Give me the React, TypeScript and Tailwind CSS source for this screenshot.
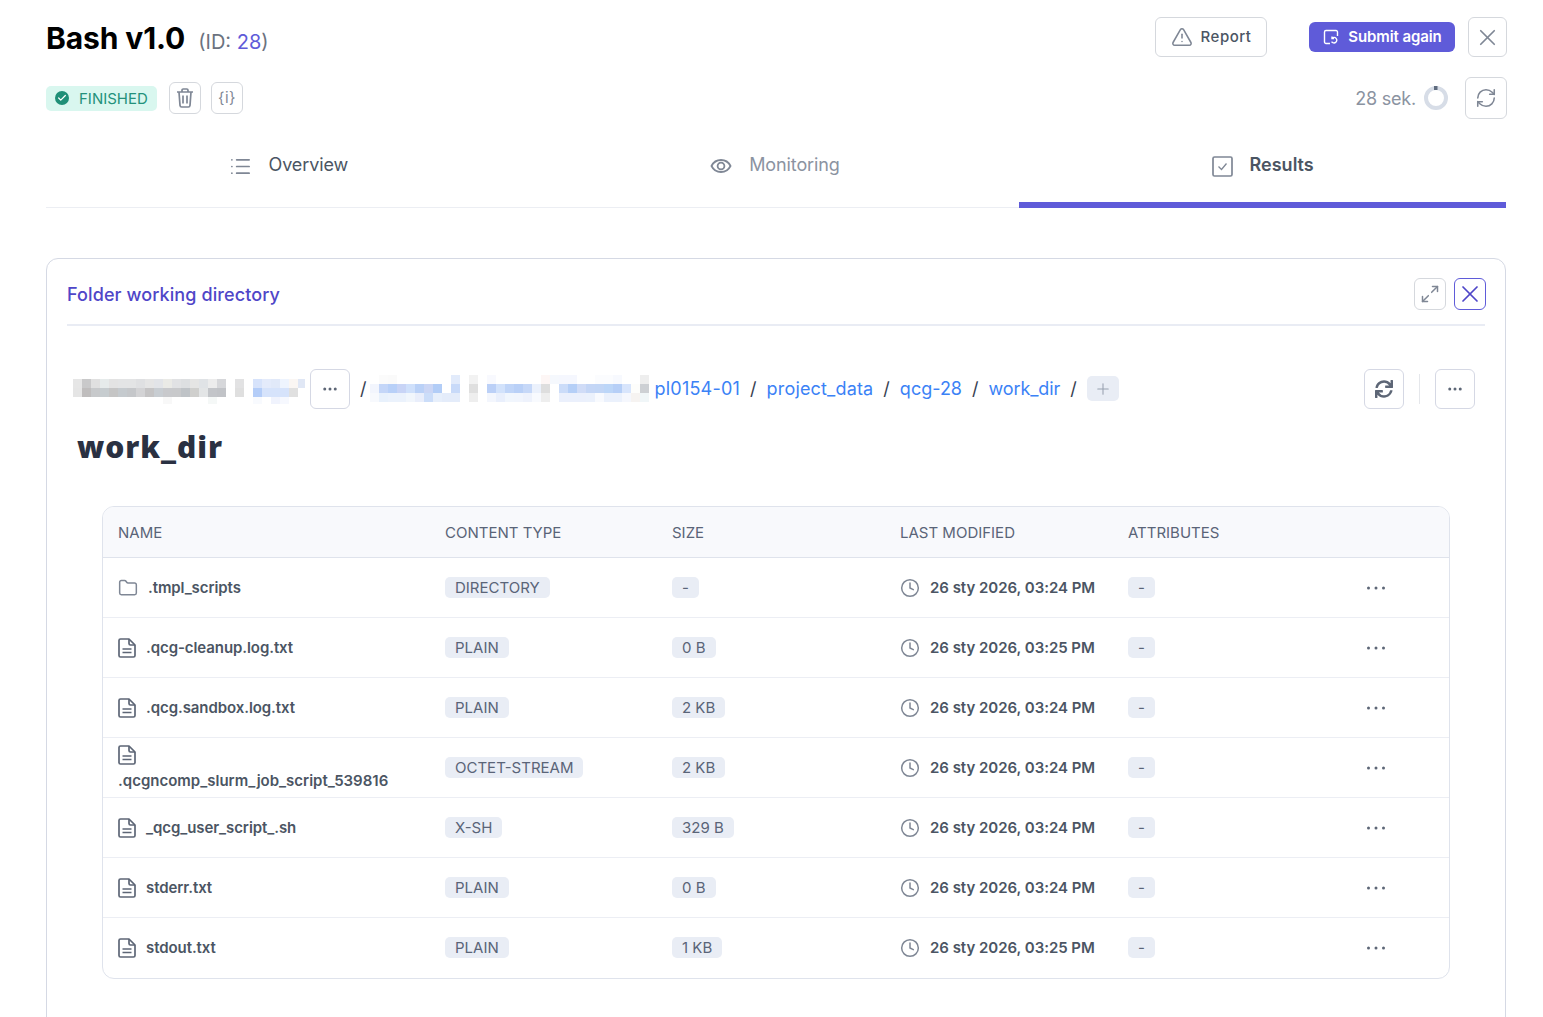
import { Check, Clock, Ellipsis, Folder, List, Maximize2, Plus, RefreshCw, TriangleAlert, X } from "lucide-react"
import { FaSync } from "react-icons/fa"

const rows = [
  { name: ".tmpl_scripts", type: "DIRECTORY", size: "-", time: "03:24", dir: true },
  { name: ".qcg-cleanup.log.txt", type: "PLAIN", size: "0 B", time: "03:25" },
  { name: ".qcg.sandbox.log.txt", type: "PLAIN", size: "2 KB", time: "03:24" },
  { name: ".qcgncomp_slurm_job_script_539816", type: "OCTET-STREAM", size: "2 KB", time: "03:24", wrap: true },
  { name: "_qcg_user_script_.sh", type: "X-SH", size: "329 B", time: "03:24" },
  { name: "stderr.txt", type: "PLAIN", size: "0 B", time: "03:24" },
  { name: "stdout.txt", type: "PLAIN", size: "1 KB", time: "03:25" },
]

const gridCols = "grid grid-cols-[327px_227px_228px_228px_1fr] items-center"

function Badge({ children }: { children: React.ReactNode }) {
  return <span className="block h-[21px] w-fit rounded-[5px] bg-[#e9edf5] px-2.5 text-[15px] leading-[21px] text-[#5a6478]">{children}</span>
}

function FileIcon({ className }: { className?: string }) {
  return (
    <svg width="18" height="20" viewBox="0 0 18 20" fill="none" stroke="currentColor" strokeWidth="1.7" strokeLinejoin="round" className={className}>
      <path d="M2.500 1h8.500l6 6v10.500a1.500 1.500 0 0 1-1.500 1.500h-13A1.500 1.500 0 0 1 1 17.500v-15A1.500 1.500 0 0 1 2.500 1Z" />
      <path d="M11 1v4.500a1.500 1.500 0 0 0 1.500 1.500H17M4.500 11h9M4.500 14.500h9" />
    </svg>
  )
}

function Dots() {
  return (
    <svg width="18" height="4" viewBox="0 0 18 4" fill="#5d6676">
      <circle cx="1.500" cy="2" r="1.500" />
      <circle cx="9" cy="2" r="1.500" />
      <circle cx="16.500" cy="2" r="1.500" />
    </svg>
  )
}

// pixelated blocks covering the hidden part of the path, one 9px cell per colour
function Mosaic({ width, top, cells }: { width: number; top: number; cells: string[][] }) {
  return (
    <svg width={width} height={30} className="shrink-0">
      {cells.map((row, y) =>
        row.map((fill, x) => (fill ? <rect key={`${x}-${y}`} x={x * 9} y={top + y * 9} width={9} height={9} fill={fill} /> : null)),
      )}
    </svg>
  )
}

const _ = ""
const greyCells = [
  ["#e6e6e6", "#c9c9ca", "#e0e0e0", "#e6ebeb", "#e3e3e3", "#e3e4e5", "#e3e4e5", "#dfe0e2", "#e5e5e5", "#e2e4e8", "#eaeae6", "#e1e2e4", "#dddfe1", "#e5e5e4", "#e0e3e6", "#ececec", "#d6d7da", _, "#e2e2e3", _, "#d7e3fb", "#e4ebfb", "#e1e9f9", "#eef4fe", "#faf6f3", "#e0e7f5"],
  ["#e5e5e5", "#bfbdbd", "#c7c9cb", "#c6cccf", "#c5c5c5", "#c5cace", "#c5c7ca", "#d3d3d5", "#c5c4c5", "#c8cdd2", "#c8c9cc", "#c8c9cb", "#bfc3c7", "#cfcfcd", "#e3e5e6", "#c3c5c9", "#c1c3c7", _, "#dfdfdf", _, "#b4cdf8", "#d6e3fb", "#d6e3fb", "#d6e3fb", "#e0e0e0"],
  [_, _, _, _, _, _, _, _, _, _, "#f8f8f8", _, _, _, _, "#f5f8f7", _, _, _, _, "#f8fafe", _, "#f0f3fd", "#f6f8fe"],
]
const blueCells = [
  [_, "#fbfbfb", "#fafafa", _, _, _, _, _, _, "#e2ebfb", _, "#f2f2f2", _, "#f8f9fe", _, _, _, _, _, "#fdf6f5", "#f5f8fd", "#f5f7fe", "#f5f7fe", _, _, "#fbfcfe", "#fbfcfe", "#f7f9fe", _, _, "#eeeeee"],
  ["#f2f5fd", "#c4d6f8", "#b8d0f8", "#c8d4f6", "#cfe0fb", "#bad1f7", "#cbd6f5", "#b2cdf7", _, "#c8daf9", _, "#dfdfdf", _, "#bbd0f7", "#d2e2fb", "#c0d5f8", "#b9d0f7", "#c6d8f8", "#ebf1fc", "#dedede", _, "#cbdcf9", "#b5cff7", "#d0dcf7", "#c4d6f6", "#c2d6f6", "#bcd6f8", "#b6cff7", "#d8e5fc", "#fdfdfb", "#cdd0d4"],
  ["#f7f9fd", "#e8f1fc", "#ebf2fc", "#ebf2fc", "#f1f6fc", "#e9eefb", "#cbddf9", "#e7effb", "#e4ecfa", "#e4ecfa", _, "#eeeeee", _, "#f3f6fd", "#e9effc", "#f1f6fd", "#f1f5fd", "#eef2fc", "#f8fafe", "#eeeeee", _, "#ebf0fc", "#ebf0fc", "#ebf0fc", "#ebf1fc", "#f8fafe", "#ebf1fc", "#ebf1fc", "#f5f7fd", "#f6f3f1", "#f0f6f8"],
]

export default function App() {
  return (
    <div className="h-[1017px] overflow-hidden bg-white pl-[46px] pr-[37px] font-['Inter',sans-serif] text-[#4b5563]">
      <header className="-mr-px flex h-[77px] items-start justify-between pt-[17px]">
        <div className="flex items-baseline pt-[1px]">
          <h1 className="text-[30px] leading-10 font-bold tracking-[-0.1px] text-black">Bash v1.0</h1>
          <span className="ml-[13px] text-xl text-[#6b7280]">(ID: <span className="text-[#5f5bd9]">28</span>)</span>
        </div>
        <div className="flex items-start">
          <button className="flex h-10 w-28 items-center justify-center gap-2 rounded-md border border-[#d5d8dd] text-[15px] font-medium tracking-[0.5px] text-[#4b5563]">
            <TriangleAlert className="size-[22px] text-[#7f8795]" strokeWidth={1.7} />
            Report
          </button>
          <button className="mt-[5px] ml-[42px] flex h-[30px] w-[146px] items-center justify-center gap-2 rounded-md bg-[#5f5bd9] text-[15px] font-semibold tracking-[-0.1px] text-white">
            <svg width="18" height="18" viewBox="0 0 18 18" fill="none" stroke="currentColor" strokeWidth="1.400">
              <path d="M8 15.500H4a1.500 1.500 0 0 1-1.500-1.500V4A1.500 1.500 0 0 1 4 2.500h10A1.500 1.500 0 0 1 15.500 4v4" />
              <path d="M10 10.200a2.800 2.800 0 1 1-.4 3.400M10 8.600v2h2" />
            </svg>
            Submit again
          </button>
          <button className="ml-[13px] flex h-10 w-[39px] items-center justify-center rounded-md border border-[#d5d8dd] text-[#7f8795]">
            <X className="size-[27px]" strokeWidth={1.500} />
          </button>
        </div>
      </header>

      <div className="-mr-px flex h-[42px] items-center justify-between">
        <div className="flex items-center">
          <span className="flex h-[25px] w-[111px] items-center gap-[10px] rounded-[5px] bg-[#d9f7ef] pl-[9px] text-[15px] text-[#23917b]">
            <span className="flex size-[14px] items-center justify-center rounded-full bg-[#1f8f77] text-white">
              <Check className="size-2.5" strokeWidth={3} />
            </span>
            <span className="pt-[2px]">FINISHED</span>
          </span>
          <button className="ml-3 flex size-8 items-center justify-center rounded-md border border-[#d5d8dd] text-[#7f8795]">
            <svg width="18" height="20" viewBox="0 0 18 20" fill="none" stroke="currentColor" strokeWidth="1.700">
              <path d="M1 4h16M6 4V2.200C6 1.500 6.500 1 7.200 1h3.600c.7 0 1.200.5 1.200 1.200V4" />
              <path d="M3 4l1 13.400c.1.9.7 1.600 1.600 1.600h6.800c.9 0 1.500-.7 1.600-1.600L15 4" />
              <path d="M7 7.500v8M11 7.500v8" />
            </svg>
          </button>
          <button className="ml-2.5 flex size-8 items-center justify-center rounded-md border border-[#d5d8dd] text-[15px] tracking-[0.5px] text-[#7f8795]">{"{i}"}</button>
        </div>
        <div className="flex items-center">
          <span className="pt-[2px] text-lg tracking-[-0.2px] text-[#8b93a1]">28 sek.</span>
          <svg width="24" height="24" viewBox="0 0 24 24" fill="none" className="ml-2">
            <circle cx="12" cy="12" r="10" stroke="#d7dde7" strokeWidth="4" />
            <rect x="10" y="0" width="3.500" height="4" fill="#5f6b7e" />
          </svg>
          <button className="ml-[17px] flex size-[42px] items-center justify-center rounded-md border border-[#d5d8dd] text-[#7f8795]">
            <RefreshCw className="size-[22px]" strokeWidth={1.700} />
          </button>
        </div>
      </div>

      <nav className="mt-px grid h-[88px] grid-cols-3 border-b border-[#eceef3]">
        <div className="flex items-start justify-center gap-[17px] pt-[34px] pr-0.5 text-lg tracking-[-0.1px]">
          <List className="mt-px size-[23px] text-[#7f8795]" strokeWidth={1.800} />
          <span className="leading-[22px]">Overview</span>
        </div>
        <div className="flex items-start justify-center gap-[17px] pt-[34px] pr-0.5 text-lg tracking-[-0.1px] text-[#8b93a1]">
          <svg width="22" height="22" viewBox="0 0 22 22" fill="none" stroke="#7f8795" strokeWidth="1.800" className="mt-px">
            <path d="M1.500 11C3.500 7 7 5 11 5s7.500 2 9.500 6c-2 4-5.500 6-9.500 6s-7.500-2-9.500-6Z" />
            <circle cx="11" cy="11" r="3.400" />
          </svg>
          <span className="leading-[22px]">Monitoring</span>
        </div>
        <div className="-mb-px flex items-start justify-center gap-[17px] border-b-[6px] border-[#5f5bd9] pt-[34px] text-lg font-semibold">
          <svg width="21" height="21" viewBox="0 0 21 21" fill="none" stroke="#7f8795" strokeWidth="1.700" className="mt-[1.500px]">
            <rect x="1" y="1" width="19" height="19" rx="1.500" />
            <path d="M6.500 10.500l3 3 5-6" strokeWidth="1.300" />
          </svg>
          <span className="leading-[22px]">Results</span>
        </div>
      </nav>

      <section className="mt-[50px] h-[800px] rounded-xl border border-[#d5d9e4] px-5">
        <div className="flex h-[67px] items-center justify-between border-b-2 border-[#e9ecf4] pt-[5px]">
          <h2 className="mt-[2px] text-lg font-medium tracking-[0.1px] text-[#4f46c8]">Folder working directory</h2>
          <div className="-mt-px -mr-px flex gap-2">
            <button className="flex size-8 items-center justify-center rounded-md border border-[#d5d8dd] text-[#7f8795]">
              <Maximize2 className="size-[20px] -scale-x-100 rotate-90" strokeWidth={1.800} />
            </button>
            <button className="flex size-8 items-center justify-center rounded-md border border-[#5f5bd9] text-[#4f46c8]">
              <X className="size-[28px]" strokeWidth={1.500} />
            </button>
          </div>
        </div>

        <div className="mt-[43px] flex h-10 items-center pl-1.5 pr-2.5 text-lg text-[#3b82f6]">
          <Mosaic width={232} top={5} cells={greyCells} />
          <button className="ml-[5px] flex size-10 shrink-0 items-center justify-center rounded-md border border-[#d5d8e4] text-[#5d6676]">
            <Ellipsis className="size-[18px]" />
          </button>
          <span className="ml-2.5 text-[#374151]">/</span>
          <span className="ml-[3px]">
            <Mosaic width={279} top={1} cells={blueCells} />
          </span>
          <span className="ml-1.5 tracking-[0.22px]">pl0154-01</span>
          <span className="mx-2.5 text-[#374151]">/</span>
          <span className="tracking-[0.17px]">project_data</span>
          <span className="mx-2.5 text-[#374151]">/</span>
          <span>qcg-28</span>
          <span className="mx-2.5 text-[#374151]">/</span>
          <span className="tracking-[-0.1px]">work_dir</span>
          <span className="mx-2.5 text-[#374151]">/</span>
          <span className="-mt-px flex h-[25px] w-8 items-center justify-center rounded-[5px] bg-[#e9edf5] text-[#98a1b0]">
            <Plus className="size-[18px]" strokeWidth={1.400} />
          </span>
          <div className="ml-auto flex items-center">
            <button className="flex size-10 items-center justify-center rounded-md border border-[#d5d8e4] text-[#5d6676]">
              <FaSync className="size-[18px]" />
            </button>
            <span className="mx-[15px] h-[30px] w-px bg-[#e5e7eb]" />
            <button className="flex size-10 items-center justify-center rounded-md border border-[#d5d8e4] text-[#5d6676]">
              <Ellipsis className="size-[18px]" />
            </button>
          </div>
        </div>

        <h3 className="mt-[18px] pl-2.5 font-['Noto_Sans',sans-serif] text-[30px] leading-10 font-black tracking-[0.950px] text-[#2a3142]">work_dir</h3>

        <div className="mt-[39px] ml-[35px] w-[1348px] overflow-hidden rounded-xl border border-[#dfe3ec]">
          <div className={`${gridCols} h-[51px] border-b border-[#dfe3ec] bg-[#f8f9fc] pt-[2px] text-[15px] text-[#5a6478] [&>div]:pl-[15px]`}>
            <div>NAME</div>
            <div>CONTENT TYPE</div>
            <div>SIZE</div>
            <div>LAST MODIFIED</div>
            <div>ATTRIBUTES</div>
          </div>
          {rows.map((row) => (
            <div key={row.name} className={`${gridCols} h-[60px] border-b border-[#eceef4] pb-[0px] text-[15px] last:border-b-0 last:pb-px [&>div]:pl-[15px]`}>
              <div className={row.wrap ? "font-semibold leading-5" : "flex items-center font-semibold"}>
                {row.dir ? (
                  <Folder className="mr-2.5 size-5 shrink-0 text-[#7f8795]" strokeWidth={1.800} />
                ) : (
                  <FileIcon className={row.wrap ? "mb-1.5 text-[#5d6676]" : "mr-[10px] shrink-0 text-[#5d6676]"} />
                )}
                <span className={row.wrap ? "whitespace-nowrap" : "mt-[2px] whitespace-nowrap tracking-[-0.08px]"}>{row.name}</span>
              </div>
              <div><Badge>{row.type}</Badge></div>
              <div><Badge>{row.size}</Badge></div>
              <div className="flex items-center gap-2.5 font-semibold">
                <Clock className="size-5 shrink-0 text-[#7f8795]" strokeWidth={1.800} />
                <span className="mt-[2px] whitespace-nowrap tracking-[-0.03px]">26 sty 2026, {row.time} PM</span>
              </div>
              <div className="flex items-center justify-between pr-[64px]">
                <Badge>-</Badge>
                <Dots />
              </div>
            </div>
          ))}
        </div>
      </section>
    </div>
  )
}
